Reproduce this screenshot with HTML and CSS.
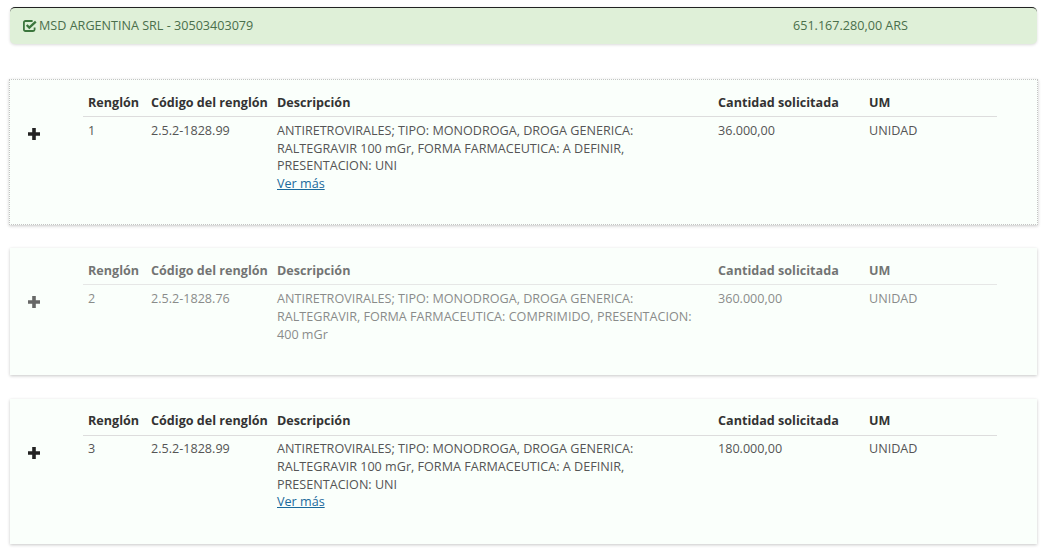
FILE: index.html
```html
<!DOCTYPE html>
<html lang="es">
<head>
<meta charset="utf-8">
<title>Renglones</title>
<link rel="stylesheet" href="styles.css">
</head>
<body>
<div class="banner">
  <div class="banner-name">
    <svg class="check" viewBox="0 0 14 12" width="14" height="12"><path d="M11.6 7.4v2.1A1.5 1.5 0 0 1 10.1 11H2.4A1.5 1.5 0 0 1 .9 9.5V2.5A1.5 1.5 0 0 1 2.4 1H9.6" fill="none" stroke="#3c763d" stroke-width="1.8"/><path d="M3.7 5 6.3 7.6 12.8 1.6" fill="none" stroke="#3c763d" stroke-width="2.3"/></svg>
    <span>MSD ARGENTINA SRL - 30503403079</span>
  </div>
  <div class="banner-amount">651.167.280,00 ARS</div>
</div>

<section class="card card-first">
  <div class="toggle"><svg viewBox="0 0 12 12" width="12" height="12"><path d="M4.2 0h3.6v4.2H12v3.6H7.8V12H4.2V7.8H0V4.2h4.2z" fill="currentColor"/></svg></div>
  <table class="grid">
    <thead><tr><th class="c1">Renglón</th><th class="c2">Código del renglón</th><th class="c3">Descripción</th><th class="c4">Cantidad solicitada</th><th class="c5">UM</th></tr></thead>
    <tbody><tr><td>1</td><td>2.5.2-1828.99</td><td>ANTIRETROVIRALES; TIPO: MONODROGA, DROGA GENERICA: RALTEGRAVIR 100 mGr, FORMA FARMACEUTICA: A DEFINIR, PRESENTACION: UNI<br><a href="#">Ver más</a></td><td>36.000,00</td><td>UNIDAD</td></tr></tbody>
  </table>
</section>

<section class="card card-muted">
  <div class="toggle"><svg viewBox="0 0 12 12" width="12" height="12"><path d="M4.2 0h3.6v4.2H12v3.6H7.8V12H4.2V7.8H0V4.2h4.2z" fill="currentColor"/></svg></div>
  <table class="grid">
    <thead><tr><th class="c1">Renglón</th><th class="c2">Código del renglón</th><th class="c3">Descripción</th><th class="c4">Cantidad solicitada</th><th class="c5">UM</th></tr></thead>
    <tbody><tr><td>2</td><td>2.5.2-1828.76</td><td>ANTIRETROVIRALES; TIPO: MONODROGA, DROGA GENERICA: RALTEGRAVIR, FORMA FARMACEUTICA: COMPRIMIDO, PRESENTACION: 400 mGr</td><td>360.000,00</td><td>UNIDAD</td></tr></tbody>
  </table>
</section>

<section class="card card-last">
  <div class="toggle"><svg viewBox="0 0 12 12" width="12" height="12"><path d="M4.2 0h3.6v4.2H12v3.6H7.8V12H4.2V7.8H0V4.2h4.2z" fill="currentColor"/></svg></div>
  <table class="grid">
    <thead><tr><th class="c1">Renglón</th><th class="c2">Código del renglón</th><th class="c3">Descripción</th><th class="c4">Cantidad solicitada</th><th class="c5">UM</th></tr></thead>
    <tbody><tr><td>3</td><td>2.5.2-1828.99</td><td>ANTIRETROVIRALES; TIPO: MONODROGA, DROGA GENERICA: RALTEGRAVIR 100 mGr, FORMA FARMACEUTICA: A DEFINIR, PRESENTACION: UNI<br><a href="#">Ver más</a></td><td>180.000,00</td><td>UNIDAD</td></tr></tbody>
  </table>
</section>
</body>
</html>
```
FILE: styles.css
```css
* { box-sizing: border-box; }
html, body { margin: 0; background: #fff; }
body {
  width: 1052px;
  height: 554px;
  overflow: hidden;
  padding: 7px 15px 0 10px;
  font-family: "Open Sans", "Liberation Sans", sans-serif;
  font-size: 12.6px;
  line-height: 17.64px;
  color: #555;
}
.banner {
  display: flex;
  align-items: center;
  height: 37px;
  padding: 0 13px;
  color: #4a6f4b;
  background: #dff0d8;
  border-top: 1px solid #222;
  border-radius: 5px;
  box-shadow: 0 1px 3px rgba(0,0,0,.15);
}
.banner-name { display: flex; align-items: center; gap: 2px; width: 770px; }
.check { flex: none; }
.card {
  display: flex;
  align-items: flex-start;
  background: #fafffb;
  box-shadow: 0 1px 3px rgba(0,0,0,.22);
}
.card-first {
  margin: 35px -1px 0;
  height: 146px;
  border: 1px dotted #c4c4c4;
  padding-top: 14px;
}
.card-muted { margin-top: 23px; height: 127px; padding-top: 14px; }
.card-muted > * { opacity: .68; }
.card-last { margin-top: 24px; height: 145px; padding-top: 13px; }
.toggle {
  flex: none;
  width: 73px;
  padding: 34px 0 0 18px;
  color: #222;
  line-height: 0;
}
.card-last .toggle { padding-top: 35px; }
.grid {
  width: 914px;
  table-layout: fixed;
  border-collapse: collapse;
}
.c1 { width: 63px; }
.c2 { width: 126px; }
.c3 { width: 441px; }
.c4 { width: 151px; }
.c5 { width: 133px; }
.grid th {
  padding: 0 5px 4px;
  height: 22px;
  font-weight: 700;
  text-align: left;
  color: #333;
  white-space: nowrap;
  border-bottom: 1px solid #ddd;
}
.card-last .grid th { height: 23px; padding-bottom: 5px; }
.grid td {
  padding: 5.3px 5px 0;
  vertical-align: top;
}
.card-muted .grid td { padding-top: 5.7px; }
.card-last .grid td { padding-top: 4.75px; }
.grid a { color: #1b6a9c; text-decoration: underline; }
```
